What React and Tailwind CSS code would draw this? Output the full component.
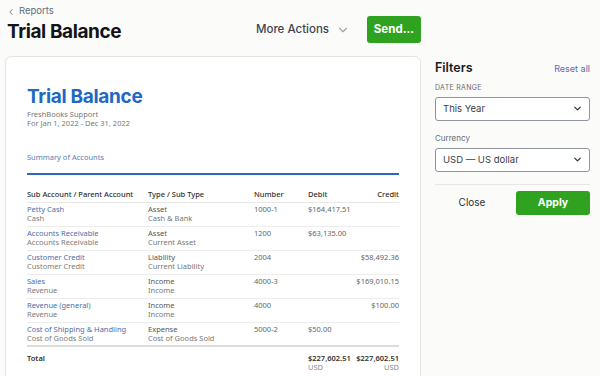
import React from 'react';
import { ChevronLeft, ChevronDown } from 'lucide-react';

const rows = [
  { name: 'Petty Cash', parent: 'Cash', type: 'Asset', sub: 'Cash & Bank', number: '1000-1', debit: '$164,417.51', credit: '' },
  { name: 'Accounts Receivable', parent: 'Accounts Receivable', type: 'Asset', sub: 'Current Asset', number: '1200', debit: '$63,135.00', credit: '' },
  { name: 'Customer Credit', parent: 'Customer Credit', type: 'Liability', sub: 'Current Liability', number: '2004', debit: '', credit: '$58,492.36' },
  { name: 'Sales', parent: 'Revenue', type: 'Income', sub: 'Income', number: '4000-3', debit: '', credit: '$169,010.15' },
  { name: 'Revenue (general)', parent: 'Revenue', type: 'Income', sub: 'Income', number: '4000', debit: '', credit: '$100.00' },
  { name: 'Cost of Shipping & Handling', parent: 'Cost of Goods Sold', type: 'Expense', sub: 'Cost of Goods Sold', number: '5000-2', debit: '$50.00', credit: '' },
];

const head = "font-['Inter','Liberation_Sans',sans-serif]";
const body = "font-['Noto_Sans','Liberation_Sans',sans-serif]";

const Select = ({ value }) => (
  <div className="h-[24px] border border-[#8f959c] rounded-[3px] bg-white flex items-center justify-between pl-[7px] pr-[6px]">
    <span className="text-[9.5px] text-[#3b4047]">{value}</span>
    <ChevronDown size={11} strokeWidth={2.6} className="text-[#2b2f35]" />
  </div>
);

export default function App() {
  return (
    <div className={`h-[376px] w-[600px] overflow-hidden bg-[#fbfbfa] flex ${head}`}>
      {/* left column */}
      <div className="w-[421px] pl-[5px] shrink-0">
        <div className="flex items-start justify-between h-[56px]">
          <div className="pl-[2px] pt-[2px]">
            <div className="flex items-center gap-[3px] h-[18px] pt-[1px] text-[#5f6c7d] text-[9.5px]">
              <ChevronLeft size={10} strokeWidth={2} className="-ml-[1px]" />
              <span>Reports</span>
            </div>
            <h1 className="text-[19px] leading-[24px] font-bold text-[#111418] tracking-[-0.4px]">Trial Balance</h1>
          </div>
          <div className="flex items-center pt-[16px]">
            <div className="flex items-center gap-[7px] text-[11.5px] font-medium text-[#3d4452] mr-[17px]">
              <span>More Actions</span>
              <ChevronDown size={14} strokeWidth={2} className="text-[#9ea3aa]" />
            </div>
            <button className="h-[27px] w-[54px] rounded-[3px] bg-[#2fa31f] text-white text-[11.5px] font-bold">Send...</button>
          </div>
        </div>

        {/* report card */}
        <div className="bg-white border border-[#e4e4e4] rounded-[6px] h-[340px] px-[21px] pt-[28px]">
          <div className="text-[19px] leading-[23px] font-bold text-[#2167c3] tracking-[-0.3px]">Trial Balance</div>
          <div className={`${body} text-[7.5px] leading-[9px] text-[#787878] mt-[2px]`}>
            <div>FreshBooks Support</div>
            <div>For Jan 1, 2022 - Dec 31, 2022</div>
          </div>
          <div className={`${body} text-[7.5px] text-[#5d7db4] mt-[24px] leading-[10px]`}>Summary of Accounts</div>
          <div className="h-[2px] bg-[#2c69c1] mt-[11px]" />

          <div className={`${body} mt-[12px] text-[7.5px]`}>
            <div className="flex h-[16px] items-center text-[#2f2f2f] font-medium border-b border-[#e8e8e8]">
              <div className="w-[121px]">Sub Account / Parent Account</div>
              <div className="w-[106px]">Type / Sub Type</div>
              <div className="w-[54px]">Number</div>
              <div className="w-[47px]">Debit</div>
              <div className="w-[44px] text-right">Credit</div>
            </div>
            {rows.map((r, i) => (
              <div key={r.name} className={`flex h-[24px] pt-[2px] leading-[9px] ${i < rows.length - 1 ? 'border-b border-[#ececec]' : 'border-b-[2px] border-[#dcdcdc]'}`}>
                <div className="w-[121px] whitespace-nowrap">
                  <div className="text-[#4d6ea6]">{r.name}</div>
                  <div className="text-[#7c7c7c]">{r.parent}</div>
                </div>
                <div className="w-[106px] whitespace-nowrap text-[#777]">
                  <div className="text-[#555]">{r.type}</div>
                  <div>{r.sub}</div>
                </div>
                <div className="w-[54px] text-[#666]">{r.number}</div>
                <div className="w-[47px] text-[#666] whitespace-nowrap">{r.debit}</div>
                <div className="w-[44px] text-right text-[#666] whitespace-nowrap">{r.credit}</div>
              </div>
            ))}
            <div className="flex pt-[7px] leading-[9px]">
              <div className="w-[121px] font-semibold text-[#333]">Total</div>
              <div className="w-[106px]" />
              <div className="w-[54px]" />
              <div className="w-[47px] whitespace-nowrap">
                <div className="font-semibold text-[#333]">$227,602.51</div>
                <div className="text-[#888]">USD</div>
              </div>
              <div className="w-[44px] text-right whitespace-nowrap">
                <div className="font-semibold text-[#333]">$227,602.51</div>
                <div className="text-[#888]">USD</div>
              </div>
            </div>
          </div>
        </div>
      </div>

      {/* filters */}
      <div className="w-[155px] ml-[14px] pt-[59px]">
        <div className="flex items-center justify-between">
          <span className="text-[12.5px] font-semibold text-[#15191e]">Filters</span>
          <span className="text-[9px] text-[#5b6ea6]">Reset all</span>
        </div>
        <div className="text-[7px] tracking-[0.3px] text-[#666b72] mt-[5px] leading-[10px]">DATE RANGE</div>
        <div className="mt-[4px]"><Select value="This Year" /></div>
        <div className="text-[8px] text-[#666b72] mt-[12px] leading-[10px]">Currency</div>
        <div className="mt-[5px]"><Select value="USD — US dollar" /></div>
        <div className="h-px bg-[#e6e6e6] mt-[12px]" />
        <div className="flex items-center mt-[6px]">
          <div className="w-[74px] text-center text-[10px] text-[#2c3038]">Close</div>
          <button className="h-[24px] w-[74px] ml-auto rounded-[3px] bg-[#2fa31f] text-white text-[10.5px] font-bold">Apply</button>
        </div>
      </div>
    </div>
  );
}
